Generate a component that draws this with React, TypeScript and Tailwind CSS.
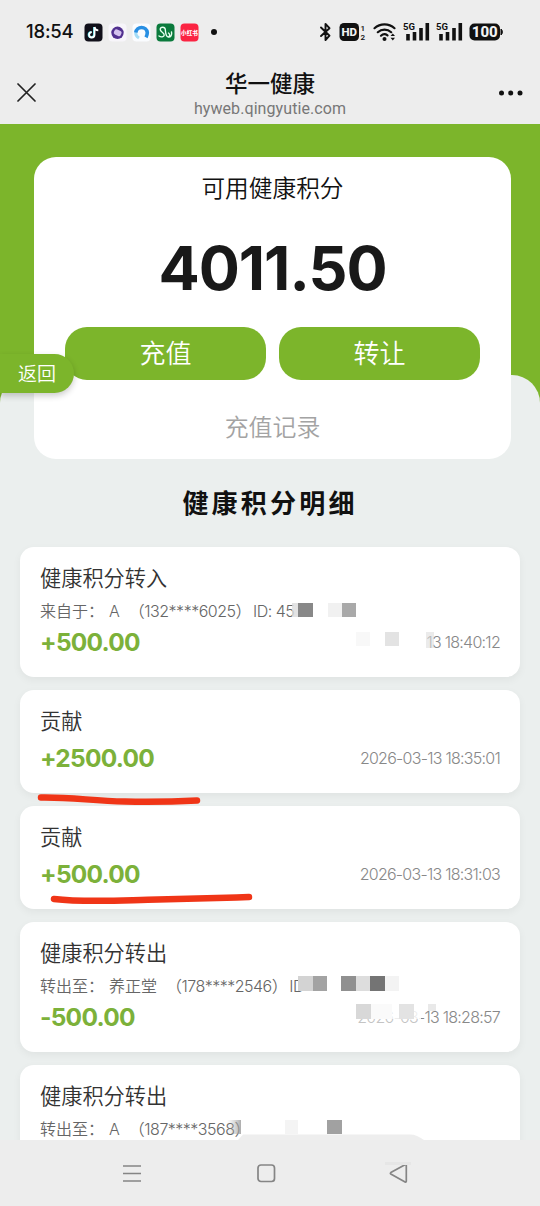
import { ReactNode } from 'react'

interface PointRecord {
  title: string
  label?: string
  name?: string
  phone?: string
  id?: string
  amount?: string
  time?: string
}

const RECORDS: PointRecord[] = [
  { title: '健康积分转入', label: '来自于：', name: 'A', phone: '132****6025', id: 'ID: 45', amount: '+500.00', time: '13 18:40:12' },
  { title: '贡献', amount: '+2500.00', time: '2026-03-13 18:35:01' },
  { title: '贡献', amount: '+500.00', time: '2026-03-13 18:31:03' },
  { title: '健康积分转出', label: '转出至：', name: '养正堂', phone: '178****2546', id: 'ID', amount: '-500.00', time: '2026-03-13 18:28:57' },
  { title: '健康积分转出', label: '转出至：', name: 'A', phone: '187****3568' },
]

// [x, y, width, height, color]
const MOSAIC: [number, number, number, number, string][] = [
  [292, 603, 6, 14, '#dcdcdccc'],
  [298, 603, 15, 14, '#888888'],
  [328, 603, 14, 14, '#f1f1f1'],
  [342, 603, 14, 14, '#a9a9a9'],
  [356, 632, 14, 14, '#f8f8f8'],
  [385, 632, 14, 14, '#e3e3e3'],
  [426, 632, 8, 16, '#dedede99'],
  [298, 976, 15, 15, '#d3d3d3'],
  [313, 976, 14, 15, '#a3a3a3'],
  [341, 976, 15, 15, '#909090'],
  [356, 976, 14, 15, '#dddddd'],
  [370, 976, 15, 15, '#747474'],
  [385, 976, 14, 15, '#f3f3f3'],
  [356, 1004, 65, 15, '#ffffffd9'],
  [356, 1019, 65, 6, '#ffffff80'],
  [356, 1004, 15, 15, '#d8d8d8'],
  [371, 1004, 21, 15, '#fafafa'],
  [399, 1004, 15, 15, '#e3e3e3'],
  [428, 1004, 8, 7, '#e9e9e9'],
  [285, 1120, 13, 14, '#f4f4f4'],
  [327, 1120, 15, 14, '#a1a1a1'],
]

function AppIcon({ children, bg }: { children: ReactNode; bg: string }) {
  return (
    <svg className="h-[19px] w-[19px]" viewBox="0 0 19 19">
      <rect x="0.5" y="0.5" width="18" height="18" rx="4" fill={bg} />
      {children}
    </svg>
  )
}

function Signal() {
  return (
    <svg className="h-[20px] w-[27px]" viewBox="0 0 27 20">
      <text x="0" y="8" fontSize="9.5" fontWeight="700" fontFamily="Roboto, sans-serif" fill="#111">5G</text>
      <path d="M5 12v6.500M11.500 10v8.500M18 6v12.500M24.300 1v17.500" stroke="#111" strokeWidth="3.600" />
    </svg>
  )
}

function StatusBar() {
  return (
    <div className="flex h-[64px] shrink-0 items-center pl-[26px] pr-[37px] text-[#111]">
      <div className="w-[58px] font-['Inter'] text-[18.500px] font-medium tracking-[-0.200px]">18:54</div>
      <div className="flex items-center gap-[5px]">
        <AppIcon bg="#11101a">
          <path d="M10 4v7.6a2.7 2.7 0 1 1-2.7-2.7" fill="none" stroke="#25d5e0" strokeWidth="2" />
          <path d="M10.5 4v7.8a2.7 2.7 0 1 1-2.7-2.7M10.5 4c.3 2 1.6 3.3 3.8 3.4" fill="none" stroke="#fff" strokeWidth="1.9" />
        </AppIcon>
        <AppIcon bg="#f7f5fa">
          <circle cx="9.5" cy="9.8" r="6.2" fill="#51308f" />
          <rect x="6" y="6.800" width="7.500" height="5.600" rx="2" fill="#d4c2ee" transform="rotate(25 9.5 9.5)" />
        </AppIcon>
        <AppIcon bg="#fafcff">
          <path d="M4 8.500c-.6 2.500.5 5 3 6.500" fill="none" stroke="#a4dcf6" strokeWidth="3" />
          <path d="M3.800 9.500A5.800 5.800 0 0 1 15.300 9.500c0 2-.6 3.500-1.300 4.800" fill="none" stroke="#288fe3" strokeWidth="3.600" />
        </AppIcon>
        <AppIcon bg="#0a7a3c">
          <path d="M3 13c2.500 1.800 6 .6 5-1.800C7.300 9.300 4 8.800 4.200 6.300 4.500 3.500 9 3.500 9.300 6.500c.3 3 .2 7 3 7.500 2.200.3 4-1.800 3.200-5M12.300 14c1.800-.5 1.800-3 .2-4" fill="none" stroke="#e8fff0" strokeWidth="1.400" strokeLinecap="round" />
        </AppIcon>
        <AppIcon bg="#fb2442">
          <text x="9.5" y="11.600" fontSize="5.600" fontWeight="900" textAnchor="middle" fontFamily="Noto Sans CJK SC, sans-serif" fill="#fff">小红书</text>
        </AppIcon>
      </div>
      <div className="ml-[12px] h-[6px] w-[6px] rounded-full bg-[#111]" />
      <div className="ml-auto flex items-center">
        <svg className="mr-[7px] h-[20px] w-[13px]" viewBox="0 0 13 20">
          <path d="M2 5.500l8.500 8.200L6.500 18V2l4 4.200L2 14" fill="none" stroke="#111" strokeWidth="1.900" strokeLinejoin="round" strokeLinecap="round" />
        </svg>
        <svg className="mr-[7px] h-[20px] w-[27px]" viewBox="0 0 27 20">
          <rect x="0.500" y="1" width="19.500" height="18" rx="4.500" fill="#111" />
          <text x="10.300" y="14.200" fontSize="11.500" fontWeight="800" textAnchor="middle" fontFamily="Roboto, sans-serif" fill="#f2f2f2">HD</text>
          <text x="21.500" y="8.500" fontSize="8" fontWeight="600" fontFamily="Roboto, sans-serif" fill="#111">1</text>
          <text x="21.500" y="18" fontSize="8" fontWeight="600" fontFamily="Roboto, sans-serif" fill="#111">2</text>
        </svg>
        <svg className="mr-[6px] h-[20px] w-[24px]" viewBox="0 0 24 20">
          <path d="M1.500 6.200a15 15 0 0 1 20 0M4.800 10.200a10 10 0 0 1 13.400 0M8 13.700a5.200 5.200 0 0 1 6.500-.4" fill="none" stroke="#111" strokeWidth="2.200" strokeLinecap="round" />
          <circle cx="11.500" cy="17" r="2" fill="#111" />
          <path d="M17.500 14l2.300-2.600L22 14zM17.500 15.800h4.500l-2.200 2.600z" fill="#111" />
        </svg>
        <div className="flex gap-[6px]">
          <Signal />
          <Signal />
        </div>
        <svg className="ml-[6px] h-[20px] w-[34px]" viewBox="0 0 34 20">
          <rect x="0.500" y="1.500" width="30.500" height="17" rx="5" fill="#111" />
          <path d="M32 7c1.800 1 1.800 5 0 6z" fill="#111" stroke="#111" />
          <text x="15.800" y="15.300" fontSize="15" fontWeight="800" textAnchor="middle" fontFamily="Roboto, sans-serif" fill="#f2f2f2">100</text>
        </svg>
      </div>
    </div>
  )
}

function TitleBar() {
  return (
    <div className="flex h-[60px] shrink-0 items-start justify-between px-[17px]">
      <svg className="mt-[19px] h-[19px] w-[60px]" viewBox="0 0 60 19">
        <path d="M1 1l17 17M18 1L1 18" stroke="#222" strokeWidth="1.700" strokeLinecap="round" />
      </svg>
      <div className="flex flex-col items-center">
        <div className="mt-[6px] text-[22.500px] font-medium leading-[24px] text-[#111]">华一健康</div>
        <div className="mt-[5px] font-[Roboto] text-[16px] leading-[19px] tracking-[0.080px] text-[#777]">hyweb.qingyutie.com</div>
      </div>
      <svg className="mt-[24px] h-[10px] w-[60px]" viewBox="0 0 60 10">
        <circle cx="30.500" cy="5" r="2.500" fill="#111" transform="translate(8)" />
        <circle cx="47.700" cy="5" r="2.500" fill="#111" />
        <circle cx="57" cy="5" r="2.500" fill="#111" />
      </svg>
    </div>
  )
}

function BalanceCard() {
  return (
    <div className="relative z-10 -mb-[84px] ml-[34px] flex h-[302px] w-[477px] shrink-0 flex-col items-center rounded-[22px] bg-white">
      <div className="mt-[17px] text-[23.700px] font-[350] leading-[26px] text-[#111]">可用健康积分</div>
      <div className="mt-[33px] font-['Inter'] text-[61px] font-bold leading-[70px] tracking-[-1px] text-[#191919]">4011.50</div>
      <div className="mt-[24px] flex gap-[13px]">
        <button className="h-[53px] w-[201px] rounded-[22px] bg-[#7cb52b] pb-[3px] text-[26px] font-[350] leading-[50px] text-white">充值</button>
        <button className="h-[53px] w-[201px] rounded-[22px] bg-[#7cb52b] pb-[3px] text-[26px] font-[350] leading-[50px] text-white">转让</button>
      </div>
      <div className="mt-[33px] text-[23.900px] font-[350] leading-[26px] text-[#a3a3a3]">充值记录</div>
    </div>
  )
}

function RecordCard({ record }: { record: PointRecord }) {
  return (
    <div className={`${record.label ? 'h-[130px]' : 'h-[103px]'} shrink-0 rounded-[14px] bg-white px-[20px] pt-[17px] shadow-[0_3px_8px_rgba(0,0,0,0.05)]`}>
      <div className="text-[21.200px] font-[350] leading-[26px] text-[#333]">{record.title}</div>
      {record.label && (
        <div className="mt-[10px] flex whitespace-pre font-['Inter','Noto_Sans_CJK_SC',sans-serif] text-[16px] font-[350] leading-[22px] text-[#666]">
          <span className="w-[69px]">{record.label}</span>
          <span>{record.name}</span>
          <span className="ml-[9px] tracking-[-0.500px]">（{record.phone}）</span>
          <span className="ml-[2px] tracking-[-0.500px]">{record.id}</span>
        </div>
      )}
      {record.amount && (
        <div className={`${record.label ? 'mt-[6px]' : 'mt-[11px]'} flex items-center justify-between font-['Inter']`}>
          <div className="text-[24.500px] font-bold leading-[28px] tracking-[-0.750px] text-[#7cb13a]">{record.amount}</div>
          <div className="text-[16px] font-light leading-[28px] tracking-[-0.740px] text-[#888]">{record.time}</div>
        </div>
      )}
    </div>
  )
}

function NavBar() {
  return (
    <div className="relative z-20 flex h-[66px] shrink-0 items-start justify-between bg-[#ededed] pl-[122px] pr-[131px] pt-[23px]">
      <svg className="h-[20px] w-[20px]" viewBox="0 0 20 20">
        <path d="M1 3h18M1 10.500h18M1 18h18" stroke="#858585" strokeWidth="1.700" />
      </svg>
      <svg className="h-[20px] w-[20px]" viewBox="0 0 20 20">
        <rect x="2" y="2" width="16.500" height="16.500" rx="3" fill="none" stroke="#858585" strokeWidth="1.700" />
      </svg>
      <svg className="h-[20px] w-[20px]" viewBox="0 0 20 20">
        <path d="M17.300 2.300v16c0 .8-.7 1-1.200.700L1.800 11c-.6-.4-.6-1 0-1.400L16 1.700c.6-.3 1.300 0 1.300.600z" fill="none" stroke="#858585" strokeWidth="1.700" />
      </svg>
    </div>
  )
}

export default function App() {
  return (
    <div className="relative flex h-[1206px] w-[540px] flex-col overflow-hidden bg-[#ededed] font-['Noto_Sans_CJK_SC',sans-serif]">
      <StatusBar />
      <TitleBar />
      <main className="flex h-[1016px] shrink-0 flex-col overflow-hidden bg-[#7cb52b] pt-[33px]">
        <BalanceCard />
        <section className="flex min-h-0 flex-1 flex-col overflow-hidden rounded-t-[28px] bg-[#ebefee] px-[20px] pt-[111px]">
          <h2 className="text-center text-[26px] font-bold leading-[32px] tracking-[3.200px] text-[#111]">健康积分明细</h2>
          <div className="mt-[29px] flex flex-col gap-[13px]">
            {RECORDS.map((record, i) => (
              <RecordCard key={i} record={record} />
            ))}
          </div>
        </section>
      </main>
      <NavBar />

      {/* floating back tab */}
      <button className="absolute left-0 top-[354px] z-20 h-[39px] w-[74px] rounded-r-full bg-[#7cb52b] pb-px text-[19px] font-[350] text-white shadow-[0_3px_6px_rgba(0,0,0,0.2)]">返回</button>

      {/* redaction blocks and marker strokes */}
      <svg className="pointer-events-none absolute inset-0 z-30" width="540" height="1206" viewBox="0 0 540 1206">
        <defs>
          <linearGradient id="smudge" x1="0" x2="1">
            <stop offset="0" stopColor="#bbb" stopOpacity="0" />
            <stop offset="1" stopColor="#999" stopOpacity="0.8" />
          </linearGradient>
        </defs>
        {MOSAIC.map(([x, y, w, h, color], i) => (
          <rect key={i} x={x} y={y} width={w} height={h} fill={color} />
        ))}
        <rect x="227" y="1120" width="14" height="14" fill="url(#smudge)" />
        <path d="M238 1140l5-5.500h167c5 0 9 2 14 5.500z" fill="#eeeeee" />
        <rect x="385" y="1162" width="26" height="3" fill="#e6e6e6" />
        <path d="M41 797.500C72 797 92 801 125 801.500C153 802 176 801.500 197 800.500" fill="none" stroke="#f03517" strokeWidth="6.500" strokeLinecap="round" />
        <path d="M54 899C88 903 126 900 158 899.500C192 898.500 220 898 249 897" fill="none" stroke="#f03517" strokeWidth="6.500" strokeLinecap="round" />
      </svg>
    </div>
  )
}
